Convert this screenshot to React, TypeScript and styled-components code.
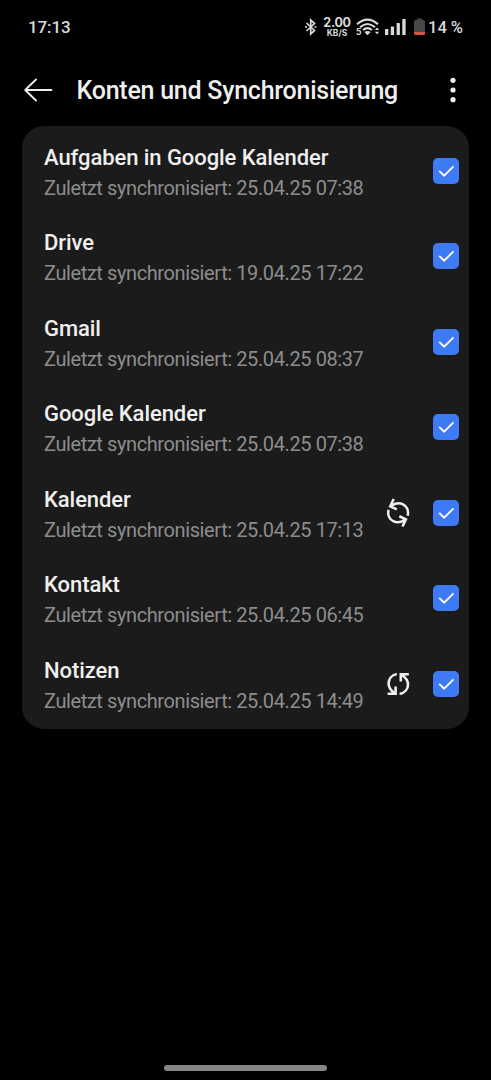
import React from "react";
import styled, { createGlobalStyle } from "styled-components";

const GlobalStyle = createGlobalStyle`
  * { box-sizing: border-box; }
  body { margin: 0; background: #000; font-family: Roboto, "Liberation Sans", sans-serif; }
`;

const Screen = styled.main`
  width: 491px;
  height: 1080px;
  display: flex;
  flex-direction: column;
  background: #000;
  color: #efefef;
  overflow: hidden;
`;

const StatusBar = styled.header`
  height: 54px;
  padding: 0 28px;
  display: flex;
  align-items: center;
  justify-content: space-between;
  color: #dadada;
`;

const Clock = styled.time`
  font-size: 17px;
  font-weight: 500;
  letter-spacing: -0.1px;
`;

const StatusIcons = styled.div`
  display: flex;
  align-items: center;
`;

const Speed = styled.div`
  width: 26px;
  margin: 1px 6px 0 7px;
  display: flex;
  flex-direction: column;
  align-items: center;
  white-space: nowrap;
`;

const SpeedValue = styled.span`
  font: 700 12.5px/10px Inter, sans-serif;
  letter-spacing: -0.3px;
`;

const SpeedUnit = styled.span`
  font: 700 8.5px/10px Inter, sans-serif;
`;

const Battery = styled.span`
  margin-left: 3px;
  width: 35px;
  font-size: 16.5px;
  font-weight: 500;
  white-space: nowrap;
`;

const AppBar = styled.div`
  height: 72px;
  padding: 0 35px 0 24px;
  display: flex;
  align-items: center;
`;

const IconButton = styled.button`
  padding: 0;
  border: 0;
  background: none;
  color: inherit;
  display: flex;
`;

const Title = styled.h1`
  flex: 1;
  margin: 2px 0 0 23.5px;
  font-size: 25px;
  letter-spacing: -0.25px;
  line-height: 32px;
  font-weight: 500;
  white-space: nowrap;
`;

const Card = styled.ul`
  list-style: none;
  margin: 0 22px;
  padding: 2px 10px 2.5px 22px;
  height: 603px;
  border-radius: 22px;
  background: #1b1b1b;
`;

const Row = styled.li`
  height: 85.5px;
  display: flex;
  align-items: center;
`;

const RowText = styled.div`
  flex: 1;
  white-space: nowrap;
  padding-top: 4px;
`;

const RowTitle = styled.div`
  font-size: 22px;
  letter-spacing: -0.07px;
  line-height: 30px;
  font-weight: 500;
`;

const RowDetail = styled.div`
  font-size: 20px;
  letter-spacing: -0.4px;
  line-height: 30px;
  color: #8d8d8d;
`;

const SyncSlot = styled.span`
  display: flex;
  margin-right: 23px;
`;

const SyncDrawing = styled.svg`
  overflow: visible;
`;

const Checkbox = styled.span`
  width: 26px;
  height: 26px;
  border-radius: 5px;
  background: #3e7af5;
  display: flex;
`;

const Footer = styled.footer`
  flex: 1;
  display: flex;
  align-items: flex-end;
  justify-content: center;
  padding-bottom: 9px;
`;

const HomeIndicator = styled.div`
  width: 163px;
  height: 6px;
  border-radius: 3px;
  background: #858585;
`;

function SyncIcon({ angle }: { angle: number }) {
  return (
    <SyncDrawing width="24" height="24" viewBox="0 0 24 24" fill="none" stroke="#efefef" strokeWidth="2.6">
      <g transform={`rotate(${angle} 12 12)`}>
        <path d="M10.8 2.1C5.5 3.2 2.6 7.2 2.6 11.6C2.6 15.4 4.7 18.4 8.4 21M1.6 21.8H9.6V14.6" />
        <path d="M13.6 21.9C18.9 20.8 22 16.8 22 12.4C22 8.6 19.7 5.6 16 3M22.8 2.2H14.8V9.4" />
      </g>
    </SyncDrawing>
  );
}

const accounts: { name: string; synced: string; angle?: number }[] = [
  { name: "Aufgaben in Google Kalender", synced: "25.04.25 07:38" },
  { name: "Drive", synced: "19.04.25 17:22" },
  { name: "Gmail", synced: "25.04.25 08:37" },
  { name: "Google Kalender", synced: "25.04.25 07:38" },
  { name: "Kalender", synced: "25.04.25 17:13", angle: -65 },
  { name: "Kontakt", synced: "25.04.25 06:45" },
  { name: "Notizen", synced: "25.04.25 14:49", angle: 0 },
];

export default function App() {
  return (
    <Screen>
      <GlobalStyle />
      <StatusBar>
        <Clock>17:13</Clock>
        <StatusIcons>
          <svg width="12" height="18" viewBox="0 0 12 18" fill="none" stroke="currentColor" strokeWidth="1.7">
            <path d="M1.5 5L9.5 12.5L5.7 16V2L9.5 5.5L1.5 13" />
            <path d="M0 9H2M9.5 9H11.5" />
          </svg>
          <Speed>
            <SpeedValue>2.00</SpeedValue>
            <SpeedUnit>KB/S</SpeedUnit>
          </Speed>
          <svg width="24" height="18" viewBox="0 0 24 18" fill="none" stroke="currentColor" strokeWidth="2">
            <path d="M1 6.3Q11.5 -3 22 6.3M4 9.2Q11.5 2.7 19 9.2M7 12Q11.5 8.2 16 12" />
            <path d="M8.3 14Q11.5 11.8 14.7 14L11.5 17.2Z" fill="currentColor" stroke="none" />
            <path d="M18.8 12L21 9.6L23.2 12ZM18.8 13.8L21 16.2L23.2 13.8Z" fill="currentColor" stroke="none" />
            <text x="0" y="17" fontSize="8.5" fontWeight="700" fontFamily="Inter, sans-serif" fill="currentColor" stroke="none">5</text>
          </svg>
          <svg width="22" height="18" viewBox="0 0 22 18" fill="currentColor" style={{ marginLeft: 5 }}>
            <rect x="0" y="11" width="3.3" height="6" rx=".6" />
            <rect x="5.8" y="8.5" width="3.3" height="8.5" rx=".6" />
            <rect x="11.6" y="5" width="3.3" height="12" rx=".6" />
            <rect x="17.3" y="1" width="3.3" height="16" rx=".6" />
          </svg>
          <svg width="11" height="18" viewBox="0 0 11 18" style={{ marginLeft: 7 }}>
            <path d="M3 .5H8V2H9.5Q11 2 11 3.5V14H0V3.5Q0 2 1.5 2H3Z" fill="#484848" />
            <path d="M0 14H11V15.5Q11 17 9.5 17H1.5Q0 17 0 15.5Z" fill="#d45445" />
          </svg>
          <Battery>14 %</Battery>
        </StatusIcons>
      </StatusBar>
      <AppBar>
        <IconButton aria-label="Zurück">
          <svg width="29" height="24" viewBox="0 0 29 24" fill="none" stroke="currentColor" strokeWidth="1.8" strokeLinecap="round" strokeLinejoin="round">
            <path d="M12 1.5L1.2 12L12 22.5M1.2 12H27.5" />
          </svg>
        </IconButton>
        <Title>Konten und Synchronisierung</Title>
        <IconButton aria-label="Mehr">
          <svg width="6" height="26" viewBox="0 0 6 26" fill="currentColor">
            <circle cx="3" cy="3.3" r="2.6" />
            <circle cx="3" cy="13" r="2.6" />
            <circle cx="3" cy="22.7" r="2.6" />
          </svg>
        </IconButton>
      </AppBar>
      <Card>
        {accounts.map(({ name, synced, angle }) => (
          <Row key={name}>
            <RowText>
              <RowTitle>{name}</RowTitle>
              <RowDetail>Zuletzt synchronisiert: {synced}</RowDetail>
            </RowText>
            {angle !== undefined && (
              <SyncSlot>
                <SyncIcon angle={angle} />
              </SyncSlot>
            )}
            <Checkbox role="checkbox" aria-checked="true" aria-label={name}>
              <svg width="26" height="26" viewBox="0 0 26 26" fill="none" stroke="#fff" strokeWidth="1.9" strokeLinecap="round" strokeLinejoin="round">
                <path d="M6.7 13.4L11.2 17.7L20 8.9" />
              </svg>
            </Checkbox>
          </Row>
        ))}
      </Card>
      <Footer>
        <HomeIndicator />
      </Footer>
    </Screen>
  );
}
